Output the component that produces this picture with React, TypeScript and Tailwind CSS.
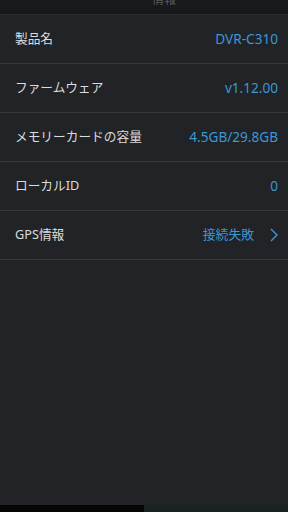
import React from "react";

const rows: { label: string; value: string; arrow?: boolean }[] = [
  { label: "製品名", value: "DVR-C310" },
  { label: "ファームウェア", value: "v1.12.00" },
  { label: "メモリーカードの容量", value: "4.5GB/29.8GB" },
  { label: "ローカルID", value: "0" },
  { label: "GPS情報", value: "接続失敗", arrow: true },
];

export default function App() {
  return (
    <div
      className="w-[288px] h-[512px] flex flex-col bg-[#212326] overflow-hidden"
      style={{ fontFamily: '"Noto Sans", "Noto Sans CJK JP", sans-serif' }}
    >
      <div className="h-[15px] shrink-0 bg-[#17191b] border-b border-[#2a2d30] flex items-start justify-center overflow-hidden">
        <span className="text-[12px] leading-none text-[#5a5d60] -mt-[6px] ml-[40px]">情報</span>
      </div>
      <div className="flex flex-col">
        {rows.map((r) => (
          <div
            key={r.label}
            className="h-[49px] flex items-center justify-between pl-[15px] pr-[10px] border-b border-[#373a3d]"
          >
            <span className="text-[12.7px] text-[#dcddde]">{r.label}</span>
            <div className="flex items-center gap-[16px]">
              <span className={r.arrow ? "text-[12.8px] text-[#3b97d6]" : "text-[13.6px] text-[#3b97d6]"}>
                {r.value}
              </span>
              {r.arrow && (
                <svg width="8" height="14" viewBox="0 0 8 14" fill="none">
                  <path d="M1 1 L7 7 L1 13" stroke="#3b97d6" strokeWidth="1.4" />
                </svg>
              )}
            </div>
          </div>
        ))}
      </div>
      <div className="flex-1" />
      <div className="h-[7px] flex">
        <div className="w-1/2 bg-[#060607]" />
        <div className="w-1/2 bg-[#1b2224]" />
      </div>
    </div>
  );
}
